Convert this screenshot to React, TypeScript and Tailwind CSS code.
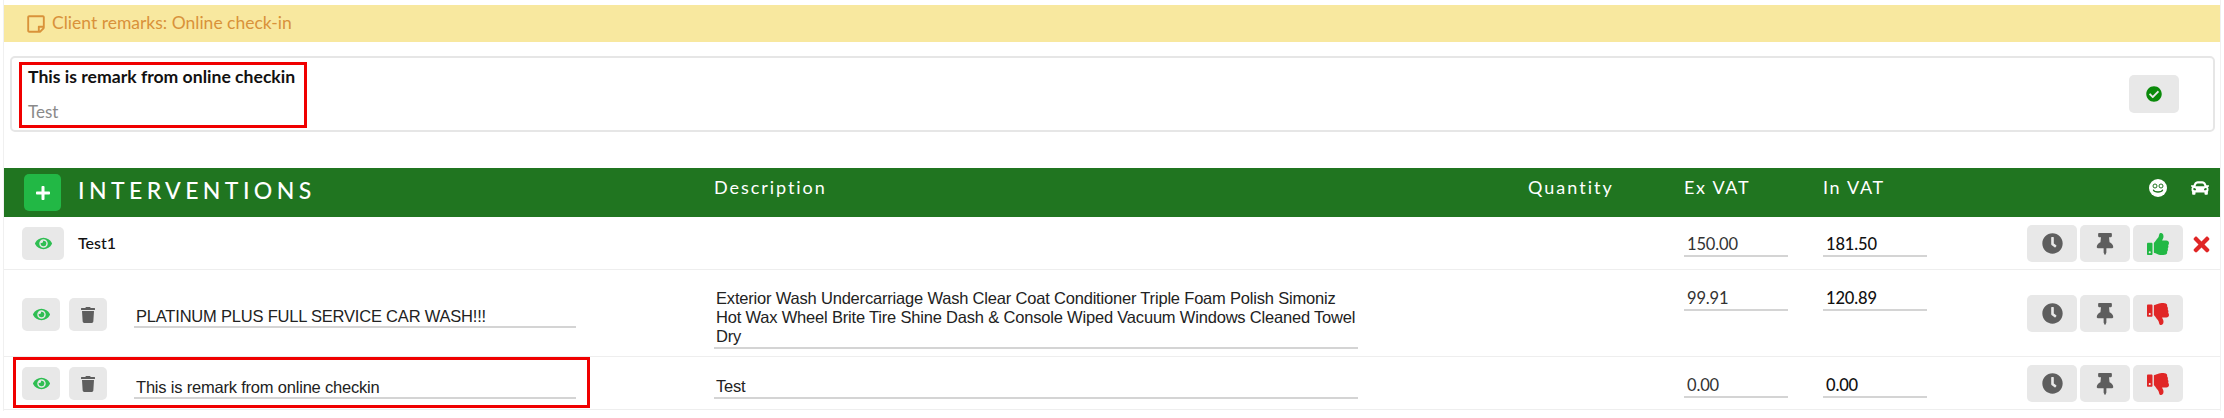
import { FaCar, FaCheckCircle, FaClock, FaEye, FaPlus, FaRegStickyNote, FaThumbsDown, FaThumbsUp, FaThumbtack, FaTimes, FaTrash } from "react-icons/fa"

const gridCols = "grid grid-cols-[710px_813px_157px_139px_204px_1fr]"

function GrayButton({ children, className }: { children: React.ReactNode; className: string }) {
  return <button className={`flex h-[37px] items-center justify-center rounded-[5px] bg-[#e8e8e8] ${className}`}>{children}</button>
}

function SmileIcon() {
  return (
    <svg viewBox="0 0 18 18" className="h-[18px] w-[18px]">
      <circle cx="9" cy="9" r="9" fill="#fff" />
      <circle cx="6" cy="7" r="2" fill="none" stroke="#207520" strokeWidth="1" />
      <circle cx="12" cy="7" r="2" fill="none" stroke="#207520" strokeWidth="1" />
      <path d="M4.5 11.2c1.2 2.4 7.8 2.4 9 0" fill="none" stroke="#207520" strokeWidth="1.3" strokeLinecap="round" />
    </svg>
  )
}

function Actions({ top, liked, removable }: { top: string; liked?: boolean; removable?: boolean }) {
  return (
    <div className={`flex items-start ${top}`}>
      <GrayButton className="w-[50px] mr-[3px]">
        <FaClock className="text-[21px] text-[#5e5e5e]" />
      </GrayButton>
      <GrayButton className="w-[50px] mr-[3px]">
        <FaThumbtack className="text-[22px] text-[#5e5e5e]" />
      </GrayButton>
      <GrayButton className="w-[50px]">
        {liked ? <FaThumbsUp className="text-[22px] text-[#22b845]" /> : <FaThumbsDown className="text-[22px] text-[#e02626]" />}
      </GrayButton>
      {removable && <FaTimes className="mt-[8px] ml-[7px] text-[23px] text-[#e02626]" />}
    </div>
  )
}

function Amount({ value, top, dark }: { value: string; top: string; dark?: boolean }) {
  return (
    <div className={top}>
      <div className={`w-[104px] border-b-2 border-[#d4d4d4] pl-[3px] text-[16.5px] leading-[22px] tracking-[-0.15px] ${dark ? "font-medium text-[#111]" : "text-[#333]"}`}>
        {value}
      </div>
    </div>
  )
}

function Description({ value, top }: { value: string; top: string }) {
  return (
    <div className={top}>
      <div className="w-[644px] border-b-2 border-[#d4d4d4] pb-[1px] pl-[2px] font-['Liberation_Sans',sans-serif] text-[16.5px] leading-[19px] tracking-[-0.19px] text-[#222]">
        {value}
      </div>
    </div>
  )
}

function LeftCell({ top, name, fieldTop }: { top: string; name: string; fieldTop: string }) {
  return (
    <div className="flex items-start pl-[18px]">
      <div className={`flex gap-[9px] ${top}`}>
        <button className="flex h-[33px] w-[38px] items-center justify-center rounded-[5px] bg-[#e8e8e8]">
          <FaEye className="text-[17px] text-[#2fbe52]" />
        </button>
        <button className="flex h-[33px] w-[38px] items-center justify-center rounded-[5px] bg-[#e8e8e8]">
          <FaTrash className="text-[16px] text-[#5e5e5e]" />
        </button>
      </div>
      <div className={`ml-[27px] ${fieldTop}`}>
        <div className="w-[442px] border-b-2 border-[#d4d4d4] pl-[2px] font-['Liberation_Sans',sans-serif] text-[16.5px] leading-[20px] tracking-[-0.2px] text-[#222]">
          {name}
        </div>
      </div>
    </div>
  )
}

export default function App() {
  return (
    <div className="min-h-[418px] bg-white font-['Lato',sans-serif]">
      <div className="mr-[3px] ml-[3px] h-[411px] border-x border-[#f0f0f0] pt-[5px]">
        <div className="flex h-[37px] items-center bg-[#f8e89f] pl-[22px] text-[17.5px] text-[#d9923a]">
          <FaRegStickyNote className="mr-[6px] text-[20px]" />
          <span>Client remarks: Online check-in</span>
        </div>

        <div className="mt-[14px] mr-[5px] ml-[6px] flex h-[76px] items-start justify-between rounded-[5px] border-2 border-[#e6e6e6] pr-[34px] pl-[7px]">
          <div className="mt-[4px] h-[66px] w-[288px] border-[3px] border-[#f00000] pt-[0px] pl-[6px]">
            <div className="text-[17.6px] leading-[24px] font-bold text-[#111]">This is remark from online checkin</div>
            <div className="mt-[12px] text-[17px] leading-[22px] text-[#8a8a8a]">Test</div>
          </div>
          <button className="mt-[17px] flex h-[38px] w-[50px] items-center justify-center rounded-[5px] bg-[#e8e8e8]">
            <FaCheckCircle className="text-[16px] text-[#0a8a0a]" />
          </button>
        </div>

        <div className={`mt-[36px] h-[49px] items-center bg-[#207520] text-[18px] tracking-[1.7px] text-white ${gridCols}`}>
          <div className="flex items-center pl-[20px]">
            <button className="flex h-[37px] w-[37px] items-center justify-center rounded-[5px] bg-[#22b845]">
              <FaPlus className="text-[16px] text-white" />
            </button>
            <span className="mb-[5px] ml-[17px] text-[23px] font-medium tracking-[4.4px]">INTERVENTIONS</span>
          </div>
          <div className="mb-[11px] tracking-[1.95px]">Description</div>
          <div className="mb-[11px] pl-[1px] tracking-[2px]">Quantity</div>
          <div className="mb-[11px]">Ex VAT</div>
          <div className="mb-[11px]">In VAT</div>
          <div className="mb-[9px] flex items-center pl-[122px]">
            <SmileIcon />
            <FaCar className="ml-[24px] text-[18px] text-white" />
          </div>
        </div>

        <div className={`h-[53px] border-b border-[#eeeeee] ${gridCols}`}>
          <div className="flex items-start pl-[18px]">
            <button className="mt-[10px] flex h-[33px] w-[42px] items-center justify-center rounded-[5px] bg-[#e8e8e8]">
              <FaEye className="text-[17px] text-[#2fbe52]" />
            </button>
            <span className="mt-[15px] ml-[14px] text-[16px] leading-[22px] font-medium text-[#111]">Test1</span>
          </div>
          <div />
          <div />
          <Amount value="150.00" top="pt-[16px]" />
          <Amount value="181.50" top="pt-[16px]" dark />
          <Actions top="pt-[8px]" liked removable />
        </div>

        <div className={`h-[87px] border-b border-[#eeeeee] ${gridCols}`}>
          <LeftCell top="pt-[28px]" name="PLATINUM PLUS FULL SERVICE CAR WASH!!!" fieldTop="pt-[36px]" />
          <Description
            value="Exterior Wash Undercarriage Wash Clear Coat Conditioner Triple Foam Polish Simoniz Hot Wax Wheel Brite Tire Shine Dash & Console Wiped Vacuum Windows Cleaned Towel Dry"
            top="pt-[19px]"
          />
          <div />
          <Amount value="99.91" top="pt-[17px]" />
          <Amount value="120.89" top="pt-[17px]" dark />
          <Actions top="pt-[25px]" />
        </div>

        <div className={`relative h-[53px] border-b border-[#eeeeee] ${gridCols}`}>
          <LeftCell top="pt-[10px]" name="This is remark from online checkin" fieldTop="pt-[20px]" />
          <Description value="Test" top="pt-[20px]" />
          <div />
          <Amount value="0.00" top="pt-[17px]" />
          <Amount value="0.00" top="pt-[17px]" dark />
          <Actions top="pt-[8px]" />
          <div className="absolute top-0 left-[9px] h-[51px] w-[577px] border-[3px] border-[#f00000]" />
        </div>
      </div>
    </div>
  )
}
